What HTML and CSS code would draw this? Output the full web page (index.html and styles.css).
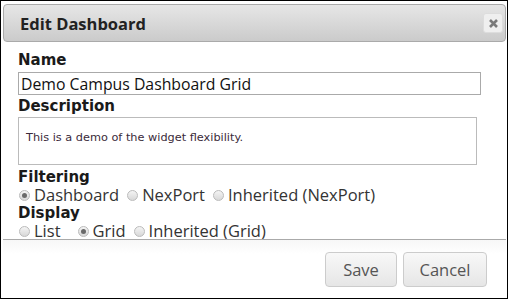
FILE: index.html
```html
<!DOCTYPE html>
<html>
<head>
<meta charset="utf-8">
<link rel="stylesheet" href="styles.css">
</head>
<body>
<div class="dialog">
  <div class="titlebar">
    <span class="title">Edit Dashboard</span>
    <button class="close" aria-label="Close">
      <svg width="11" height="11" viewBox="0 0 11 11"><path d="M2 2 L9 9 M9 2 L2 9" stroke="#7a7a7a" stroke-width="2.6" stroke-linecap="butt"/></svg>
    </button>
  </div>
  <div class="content">
    <div class="label lbl-name">Name</div>
    <input class="text-input" type="text" value="Demo Campus Dashboard Grid">
    <div class="label lbl-desc">Description</div>
    <div class="textarea">This is a demo of the widget flexibility.</div>
    <div class="label lbl-filter">Filtering</div>
    <div class="radios">
      <label class="opt"><span class="radio checked"></span>Dashboard</label>
      <label class="opt"><span class="radio"></span>NexPort</label>
      <label class="opt"><span class="radio"></span>Inherited (NexPort)</label>
    </div>
    <div class="label lbl-display">Display</div>
    <div class="radios">
      <label class="opt opt-wide"><span class="radio"></span>List</label>
      <label class="opt"><span class="radio checked"></span>Grid</label>
      <label class="opt"><span class="radio"></span>Inherited (Grid)</label>
    </div>
  </div>
  <div class="footer">
    <button class="btn">Save</button>
    <button class="btn">Cancel</button>
  </div>
</div>
</body>
</html>
```
FILE: styles.css
```css
html, body {
  margin: 0;
  padding: 0;
  background: #fff;
}
.dialog {
  box-sizing: border-box;
  width: 508px;
  height: 299px;
  border: 1px solid #000;
  padding: 3px 1px 0 2px;
  display: flex;
  flex-direction: column;
  font-family: "Open Sans", "Noto Sans", sans-serif;
  color: #222;
}
.titlebar {
  box-sizing: border-box;
  height: 38px;
  border: 1px solid #aaa;
  border-radius: 4px;
  background: linear-gradient(#e6e6e6, #cbcbcb);
  display: flex;
  align-items: center;
  justify-content: space-between;
  padding: 0 2px 0 16px;
}
.title {
  font-family: "Open Sans", sans-serif;
  font-weight: bold;
  font-size: 16.5px;
  color: #222;
}
.close {
  width: 20px;
  height: 20px;
  border: 1px solid #ddd;
  border-radius: 3px;
  background: #efefef;
  padding: 0;
  display: flex;
  align-items: center;
  justify-content: center;
}
.content {
  padding: 0 0 0 15px;
  display: flex;
  flex-direction: column;
  align-items: flex-start;
}
.label {
  font-family: "DejaVu Sans", sans-serif;
  font-weight: bold;
  font-size: 15px;
  color: #1a1a1a;
  line-height: 18px;
}
.lbl-name { margin-top: 6px; height: 24px; line-height: 24px; }
.lbl-desc { height: 22px; line-height: 22px; }
.lbl-filter { margin-top: 3px; }
.text-input {
  box-sizing: border-box;
  width: 463px;
  height: 23px;
  margin: 0;
  border: 1px solid #aaa;
  padding: 0 2px;
  font-family: "Open Sans", sans-serif;
  font-size: 15.8px;
  color: #111;
  outline: none;
}
.textarea {
  box-sizing: border-box;
  width: 459px;
  height: 48px;
  border: 1px solid #bbb;
  padding: 13px 7px;
  font-family: "DejaVu Sans", sans-serif;
  font-size: 11.3px;
  color: #3a2a3a;
}
.radios {
  display: flex;
  gap: 7px;
  height: 18px;
  line-height: 18px;
  font-size: 16.5px;
  color: #333;
}
.opt {
  display: flex;
  align-items: center;
}
.opt-wide { margin-right: 9px; }
.radio {
  box-sizing: border-box;
  width: 11px;
  height: 11px;
  border: 1px solid #bbb;
  border-radius: 50%;
  background: linear-gradient(#f4f4f4, #d8d8d8);
  margin: 0 4px 0 1px;
  display: flex;
  align-items: center;
  justify-content: center;
}
.radio.checked::after {
  content: "";
  width: 5px;
  height: 5px;
  border-radius: 50%;
  background: #6a6a6a;
}
.footer {
  margin-top: -1px;
  border-top: 1px solid #aaa;
  background: linear-gradient(#f7f7f7, #fff 14px);
  flex: 1;
  display: flex;
  justify-content: flex-end;
  align-items: flex-start;
  gap: 6px;
  padding: 12px 19px 0 0;
}
.btn {
  box-sizing: border-box;
  height: 35px;
  border: 1px solid #ccc;
  border-radius: 4px;
  background: linear-gradient(#f8f8f8, #e6e6e6);
  font-family: "Open Sans", sans-serif;
  font-size: 16.5px;
  color: #555;
  padding: 0;
}
.btn:first-child { width: 72px; }
.btn:last-child { width: 84px; }
```
